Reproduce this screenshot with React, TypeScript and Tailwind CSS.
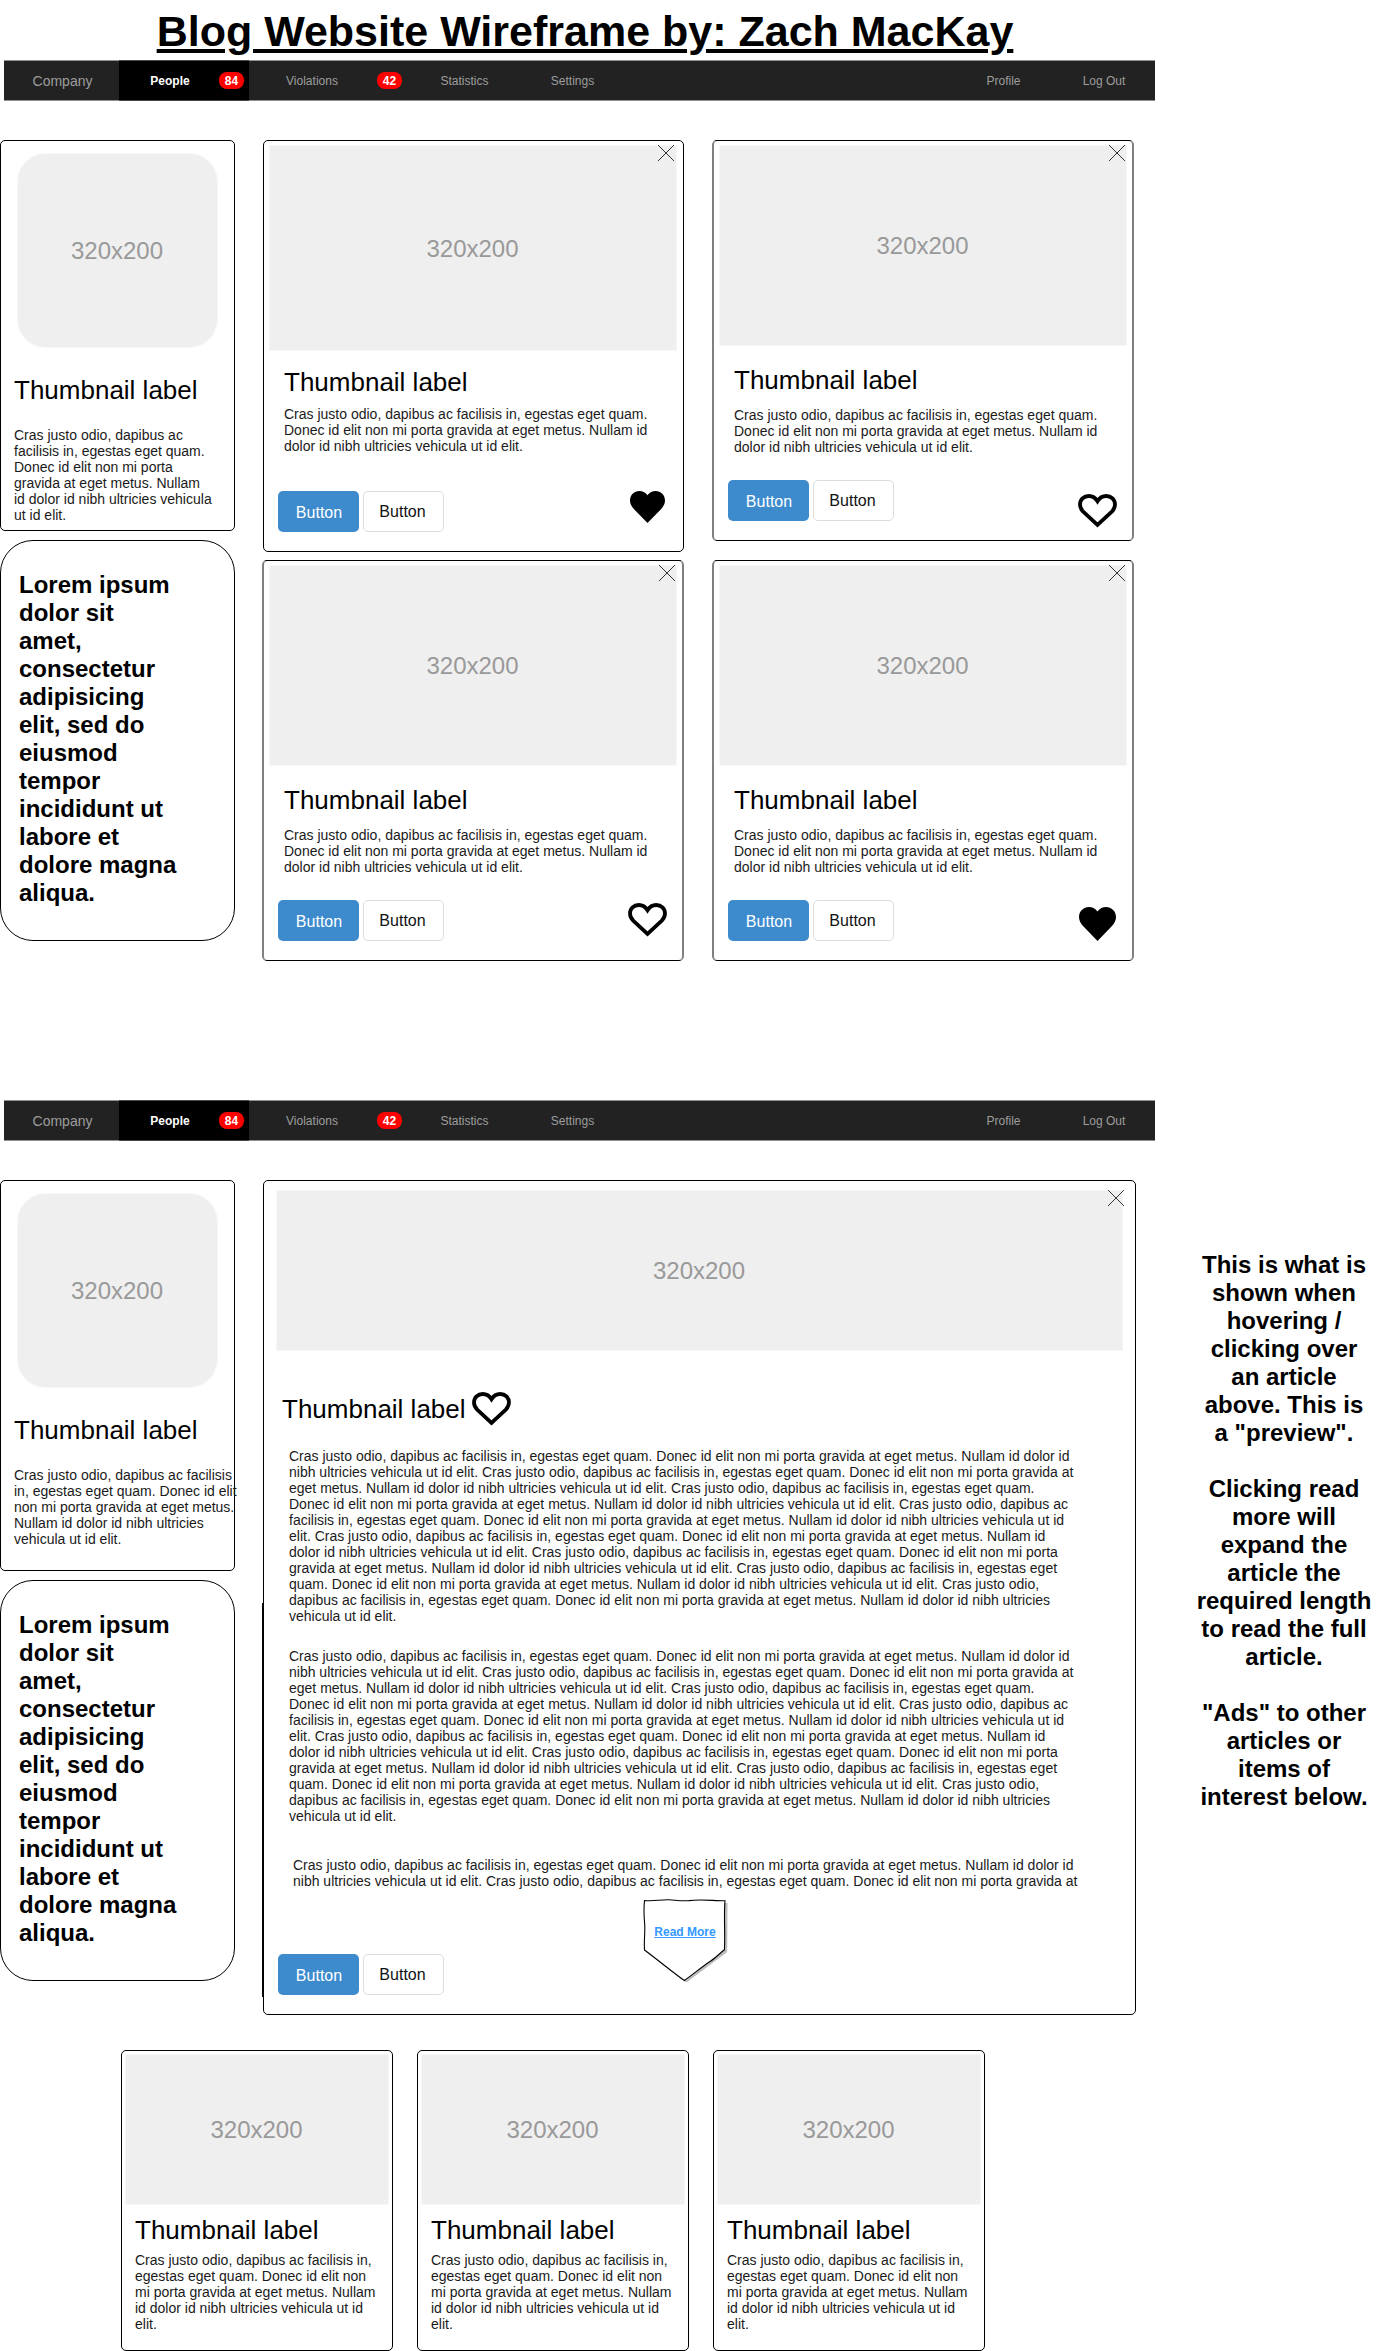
import React from "react";
import clsx from "clsx";

const SENTENCE =
  "Cras justo odio, dapibus ac facilisis in, egestas eget quam.\nDonec id elit non mi porta gravida at eget metus. Nullam id\ndolor id nibh ultricies vehicula ut id elit.";

const LONG = `Cras justo odio, dapibus ac facilisis in, egestas eget quam. Donec id elit non mi porta gravida at eget metus. Nullam id dolor id
nibh ultricies vehicula ut id elit. Cras justo odio, dapibus ac facilisis in, egestas eget quam. Donec id elit non mi porta gravida at
eget metus. Nullam id dolor id nibh ultricies vehicula ut id elit. Cras justo odio, dapibus ac facilisis in, egestas eget quam.
Donec id elit non mi porta gravida at eget metus. Nullam id dolor id nibh ultricies vehicula ut id elit. Cras justo odio, dapibus ac
facilisis in, egestas eget quam. Donec id elit non mi porta gravida at eget metus. Nullam id dolor id nibh ultricies vehicula ut id
elit. Cras justo odio, dapibus ac facilisis in, egestas eget quam. Donec id elit non mi porta gravida at eget metus. Nullam id
dolor id nibh ultricies vehicula ut id elit. Cras justo odio, dapibus ac facilisis in, egestas eget quam. Donec id elit non mi porta
gravida at eget metus. Nullam id dolor id nibh ultricies vehicula ut id elit. Cras justo odio, dapibus ac facilisis in, egestas eget
quam. Donec id elit non mi porta gravida at eget metus. Nullam id dolor id nibh ultricies vehicula ut id elit. Cras justo odio,
dapibus ac facilisis in, egestas eget quam. Donec id elit non mi porta gravida at eget metus. Nullam id dolor id nibh ultricies
vehicula ut id elit.`;

const LONG_START = LONG.split("\n").slice(0, 2).join("\n");

function Placeholder({ className }: { className: string }) {
  return (
    <div
      className={clsx(
        "flex shrink-0 items-center justify-center border border-[#f7f7f7] bg-[#efefef] bg-clip-padding pr-px text-2xl leading-[27px] text-[#999999]",
        className,
      )}
    >
      320x200
    </div>
  );
}

function Heart({ filled, className }: { filled?: boolean; className?: string }) {
  if (filled) {
    return (
      <svg viewBox="0 0 37 34" preserveAspectRatio="none" className={clsx("shrink-0", className)}>
        <path d="M18.5 4.4C16.2 1.5 13.2 0 10 0C4.4 0 0 4.4 0 10C0 13.3 1.4 16 3.8 18.8L18.5 34L33.2 18.8C35.6 16 37 13.3 37 10C37 4.4 32.6 0 27 0C23.8 0 20.8 1.5 18.5 4.4Z" />
      </svg>
    );
  }
  return (
    <svg viewBox="0 0 39 34" className={clsx("h-[34px] w-[39px] shrink-0", className)}>
      <path
        d="M19.5 7.2C17.5 3.9 14.3 2 10.8 2C5.8 2 2 5.7 2 10.6C2 13.4 3.2 15.6 5.2 17.6L19.5 30.8L33.8 17.6C35.8 15.6 37 13.4 37 10.6C37 5.7 33.2 2 28.2 2C24.7 2 21.5 3.9 19.5 7.2Z"
        fill="none"
        stroke="#000"
        strokeWidth="3.8"
        strokeMiterlimit="10"
      />
    </svg>
  );
}

function CloseMark({ className }: { className: string }) {
  return (
    <svg viewBox="0 0 16 16" className={clsx("absolute h-4 w-4", className)}>
      <path d="M0 0L16 16M16 0L0 16" stroke="#333" strokeWidth="1" fill="none" />
    </svg>
  );
}

function Buttons() {
  return (
    <div className="flex gap-1 text-base leading-[18px]">
      <div className="flex h-[41px] w-[81px] items-center justify-center rounded-[5px] bg-[#3d8bcd] pl-px pt-0.5 text-white">
        Button
      </div>
      <div className="flex h-[41px] w-[81px] items-center justify-center rounded-[5px] border border-[#dddddd] pr-0.5 text-[#111]">
        Button
      </div>
    </div>
  );
}

function NavBadge({ children }: { children: React.ReactNode }) {
  return (
    <span className="flex h-[17px] w-[25px] shrink-0 items-center justify-center rounded-[8px] bg-[#ff0000] text-xs font-bold leading-[14px] text-white">
      {children}
    </span>
  );
}

function Navbar({ className }: { className?: string }) {
  return (
    <nav
      className={clsx(
        "ml-1 flex h-[41px] w-[1151px] shrink-0 items-stretch bg-[#222222] text-xs leading-[14px] text-[#9d9d9d] shadow-[inset_0_1px_#909090,inset_0_-1px_#909090]",
        className,
      )}
    >
      <div className="flex w-[115px] items-center justify-center text-sm leading-4">
        <span className="pl-0.5 pt-px">Company</span>
      </div>
      <div className="flex w-[130px] items-center bg-black pr-[5px] font-bold text-white shadow-[inset_0_1px_#484848,inset_0_-1px_#484848]">
        <span className="flex-1 pl-0.5 text-center">People</span>
        <NavBadge>84</NavBadge>
      </div>
      <div className="flex w-[153px] items-center">
        <span className="flex-1 pr-0.5 text-center">Violations</span>
        <NavBadge>42</NavBadge>
      </div>
      <div className="flex w-[124px] items-center justify-center pl-px">Statistics</div>
      <div className="flex w-[93px] items-center justify-center">Settings</div>
      <div className="ml-auto flex w-[99px] items-center justify-center">Profile</div>
      <div className="flex w-[102px] items-center justify-center">Log Out</div>
    </nav>
  );
}

const LOREM =
  "Lorem ipsum\ndolor sit\namet,\nconsectetur\nadipisicing\nelit, sed do\neiusmod\ntempor\nincididunt ut\nlabore et\ndolore magna\naliqua.";

function Sidebar({ text }: { text: string }) {
  return (
    <aside className="flex w-[235px] shrink-0 flex-col gap-[9px]">
      <div className="h-[391px] rounded-[5px] border border-black px-[13px] pt-3">
        <Placeholder className="ml-[3px] h-[195px] w-[201px] rounded-[28px] pb-px" />
        <h2 className="mt-[27px] text-[26px] leading-[30px]">Thumbnail label</h2>
        <p className="mt-[22px] whitespace-pre text-sm leading-4 text-[#1a1a1a]">{text}</p>
      </div>
      <div className="h-[401px] whitespace-pre rounded-[33px] border border-black pl-[18px] pt-[30px] text-2xl font-bold leading-7">
        {LOREM}
      </div>
    </aside>
  );
}

interface ArticleProps {
  frame: string;
  image: string;
  title: string;
  text: string;
  footer: string;
  heart: string;
  close: string;
  filled?: boolean;
}

function Article({ frame, image, title, text, footer, heart, close, filled }: ArticleProps) {
  return (
    <article className={clsx("relative rounded-[5px] border", frame)}>
      <Placeholder className={image} />
      <h2 className={clsx("text-[26px] leading-[30px]", title)}>Thumbnail label</h2>
      <p className={clsx("whitespace-pre text-sm leading-4 text-[#1a1a1a]", text)}>{SENTENCE}</p>
      <div className={clsx("flex items-start justify-between", footer)}>
        <Buttons />
        <Heart filled={filled} className={heart} />
      </div>
      <CloseMark className={close} />
    </article>
  );
}

function ReadMore({ className }: { className?: string }) {
  return (
    <div className={clsx("relative flex h-[86px] w-[86px] justify-center", className)}>
      <svg viewBox="0 0 86 86" className="absolute inset-0 h-[86px] w-[86px]">
        <path d="M4 5L84.5 4L84.2 53L43.5 83.5L3 53Z" fill="#bdbdbd" />
        <path
          d="M1.5 1.5C10 2.6 18 .4 26 .8C32 1 38 2.4 46 1.6C58 0 70 1.8 82 1.8C80.6 18 82.4 34 81.4 50.8C76 55 72 59.500 67 62.500C58 68.500 50 75.500 41.300 81.500C28 72 15 61 1.500 51C.8 40 2.400 34 1.600 24C.9 16 .8 8 1.500 1.500Z"
          fill="#fff"
          stroke="#000"
          strokeWidth="1.1"
        />
      </svg>
      <span className="relative mr-[2px] mt-[26px] text-xs font-bold leading-[14px] text-[#3399ff] underline">
        Read More
      </span>
    </div>
  );
}

function AdCard() {
  return (
    <div className="h-[301px] w-[272px] rounded-[5px] border border-black px-[3px] pt-[3px]">
      <Placeholder className="h-[151px] w-[264px]" />
      <h2 className="ml-2.5 mt-[10px] text-[26px] leading-[30px]">Thumbnail label</h2>
      <p className="ml-2.5 mt-[7px] whitespace-pre text-sm leading-4 text-[#1a1a1a]">
        {
          "Cras justo odio, dapibus ac facilisis in,\negestas eget quam. Donec id elit non\nmi porta gravida at eget metus. Nullam\nid dolor id nibh ultricies vehicula ut id\nelit."
        }
      </p>
    </div>
  );
}

const NOTE =
  'This is what is\nshown when\nhovering /\nclicking over\nan article\nabove. This is\na "preview".\n\nClicking read\nmore will\nexpand the\narticle the\nrequired length\nto read the full\narticle.\n\n"Ads" to other\narticles or\nitems of\ninterest below.';

export default function App() {
  return (
    <main className="flex h-[2351px] w-[1378px] flex-col overflow-hidden bg-white font-['Liberation_Sans',Arial,sans-serif] text-black">
      <h1 className="flex h-[60px] w-[1170px] shrink-0 items-start justify-center pt-[7px] text-[43px] font-bold leading-[49px]">
        <span className="underline decoration-[4px] underline-offset-[3px]">Blog Website Wireframe by: Zach MacKay</span>
      </h1>

      <Navbar />

      <section className="mt-[39px] flex shrink-0 items-start">
        <Sidebar
          text={
            "Cras justo odio, dapibus ac\nfacilisis in, egestas eget quam.\nDonec id elit non mi porta\ngravida at eget metus. Nullam\nid dolor id nibh ultricies vehicula\nut id elit."
          }
        />
        <div className="ml-[27px] flex w-[422px] flex-col gap-2">
          <Article
            filled
            frame="ml-px h-[412px] w-[421px] border-black"
            image="ml-[5px] mt-1 h-[206px] w-[408px]"
            title="ml-5 mt-4"
            text="ml-5 mt-[9px]"
            footer="ml-[14px] mr-[18px] mt-[37px]"
            heart="h-[32px] w-[35px]"
            close="right-[9px] top-1"
          />
          <Article
            frame="h-[401px] w-[422px] border-x-2 border-x-[#808080] border-y-black"
            image="ml-[5px] mt-1 h-[201px] w-[408px]"
            title="ml-[20px] mt-[19px]"
            text="ml-[20px] mt-[12px]"
            footer="ml-[14px] mr-[15px] mt-[25px]"
            heart="mt-[3px]"
            close="right-[7px] top-1"
          />
        </div>
        <div className="ml-7 flex w-[422px] flex-col gap-[19px]">
          <Article
            frame="h-[401px] w-[422px] border-x-2 border-x-[#808080] border-y-black"
            image="ml-[5px] mt-1 h-[201px] w-[408px]"
            title="ml-[20px] mt-[19px]"
            text="ml-[20px] mt-[12px]"
            footer="ml-[14px] mr-[15px] mt-[25px]"
            heart="mt-[14px]"
            close="right-[7px] top-1"
          />
          <Article
            filled
            frame="h-[401px] w-[422px] border-x-2 border-x-[#808080] border-y-black"
            image="ml-[5px] mt-1 h-[201px] w-[408px]"
            title="ml-[20px] mt-[19px]"
            text="ml-[20px] mt-[12px]"
            footer="ml-[14px] mr-[16px] mt-[25px]"
            heart="mt-[7px] h-[34px] w-[37px]"
            close="right-[7px] top-1"
          />
        </div>
      </section>

      <Navbar className="mt-[139px]" />

      <section className="mt-[39px] flex shrink-0 items-start">
        <Sidebar
          text={
            "Cras justo odio, dapibus ac facilisis\nin, egestas eget quam. Donec id elit\nnon mi porta gravida at eget metus.\nNullam id dolor id nibh ultricies\nvehicula ut id elit."
          }
        />
        <article className="relative ml-7 h-[835px] w-[873px] shrink-0 rounded-[5px] border border-black">
          <Placeholder className="ml-3 mt-[9px] h-[161px] w-[847px]" />
          <div className="ml-[18px] mt-[41px] flex items-start">
            <h2 className="mt-[2px] text-[26px] leading-[30px]">Thumbnail label</h2>
            <Heart className="ml-[6px]" />
          </div>
          <p className="ml-[25px] mt-[22px] whitespace-pre text-sm leading-4 text-[#1a1a1a]">{LONG}</p>
          <p className="ml-[25px] mt-6 whitespace-pre text-sm leading-4 text-[#1a1a1a]">{LONG}</p>
          <p className="ml-[29px] mt-[33px] whitespace-pre text-sm leading-4 text-[#1a1a1a]">{LONG_START}</p>
          <div className="ml-[14px] mt-[10px] flex items-start">
            <div className="mt-[55px]">
              <Buttons />
            </div>
            <ReadMore className="ml-[199px]" />
          </div>
          <CloseMark className="right-[11px] top-[9px]" />
          <span className="absolute -left-[2px] top-[422px] h-[394px] w-px bg-black" />
        </article>
        <p className="ml-[54px] mt-[71px] w-[188px] whitespace-pre text-center text-2xl font-bold leading-7">{NOTE}</p>
      </section>

      <section className="ml-[121px] mt-[35px] flex shrink-0 gap-6">
        <AdCard />
        <AdCard />
        <AdCard />
      </section>
    </main>
  );
}
